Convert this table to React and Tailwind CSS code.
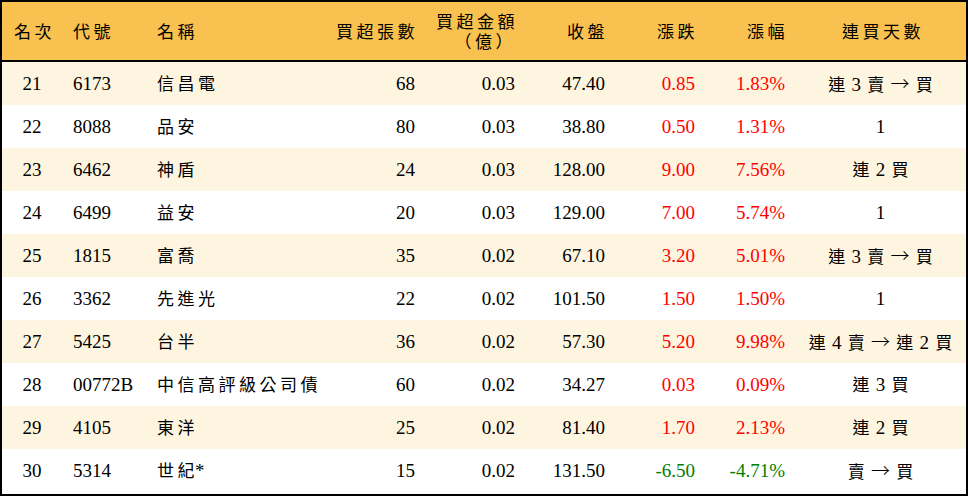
import React from "react";

const rows = [
  ["21", "6173", "信昌電", "68", "0.03", "47.40", "0.85", "1.83%", "連 3 賣 → 買", "r"],
  ["22", "8088", "品安", "80", "0.03", "38.80", "0.50", "1.31%", "1", "r"],
  ["23", "6462", "神盾", "24", "0.03", "128.00", "9.00", "7.56%", "連 2 買", "r"],
  ["24", "6499", "益安", "20", "0.03", "129.00", "7.00", "5.74%", "1", "r"],
  ["25", "1815", "富喬", "35", "0.02", "67.10", "3.20", "5.01%", "連 3 賣 → 買", "r"],
  ["26", "3362", "先進光", "22", "0.02", "101.50", "1.50", "1.50%", "1", "r"],
  ["27", "5425", "台半", "36", "0.02", "57.30", "5.20", "9.98%", "連 4 賣 → 連 2 買", "r"],
  ["28", "00772B", "中信高評級公司債", "60", "0.02", "34.27", "0.03", "0.09%", "連 3 買", "r"],
  ["29", "4105", "東洋", "25", "0.02", "81.40", "1.70", "2.13%", "連 2 買", "r"],
  ["30", "5314", "世紀*", "15", "0.02", "131.50", "-6.50", "-4.71%", "賣 → 買", "g"],
];

const isCJK = (ch) => /[\u3000-\u9fff\uff00-\uffef]/.test(ch);

function Name({ text }) {
  const parts = Array.from(text);
  return (
    <>
      {parts.map((ch, i) => {
        if (!isCJK(ch)) return <span key={i}>{ch}</span>;
        const nextCJK = i < parts.length - 1 && isCJK(parts[i + 1]);
        return (
          <span
            key={i}
            className={`text-[17px] font-['Noto_Sans_CJK_TC',sans-serif] ${nextCJK ? "mr-[3.5px]" : "mr-[0.5px]"}`}
          >
            {ch}
          </span>
        );
      })}
    </>
  );
}

function Days({ text }) {
  const parts = Array.from(text);
  return (
    <>
      {parts.map((ch, i) => {
        if (ch === "→")
          return (
            <span key={i} className="text-[19px] font-['Noto_Sans_CJK_TC',sans-serif] font-light">
              {ch}
            </span>
          );
        if (isCJK(ch))
          return (
            <span key={i} className="text-[17px] mx-[1.5px] font-['Noto_Sans_CJK_TC',sans-serif]">
              {ch}
            </span>
          );
        return <span key={i}>{ch}</span>;
      })}
    </>
  );
}

const grid =
  "grid grid-cols-[60px_83px_185px_95px_100px_90px_90px_90px_171px]";

export default function App() {
  return (
    <div className="w-[968px] h-[496px] border-2 border-black bg-white font-['Liberation_Serif','Noto_Sans_CJK_TC',serif] text-[19px] text-black leading-none">
      <div className={`${grid} h-[60px] bg-[#f8c150] border-b-2 border-black items-center`}>
        <div className="text-center pl-[2px]"><Name text="名次" /></div>
        <div className="pl-[11px]"><Name text="代號" /></div>
        <div className="pl-[12px]"><Name text="名稱" /></div>
        <div className="text-right pr-[10px]"><Name text="買超張數" /></div>
        <div className="text-right pr-[10px] leading-[19px] -mt-[1px]">
          <div><Name text="買超金額" /></div>
          <div className="pr-[2px]"><Name text="（億）" /></div>
        </div>
        <div className="text-right pr-[10px]"><Name text="收盤" /></div>
        <div className="text-right pr-[10px]"><Name text="漲跌" /></div>
        <div className="text-right pr-[10px]"><Name text="漲幅" /></div>
        <div className="text-center pl-[2px]"><Name text="連買天數" /></div>
      </div>
      {rows.map((r, i) => {
        const color = r[9] === "g" ? "text-[#008000]" : "text-[#ff0000]";
        return (
          <div
            key={r[0]}
            className={`${grid} h-[43px] items-center ${i % 2 === 0 ? "bg-[#fef5e1]" : "bg-white"}`}
          >
            <div className="text-center">{r[0]}</div>
            <div className="pl-[11px]">{r[1]}</div>
            <div className="pl-[12px]"><Name text={r[2]} /></div>
            <div className="text-right pr-[10px]">{r[3]}</div>
            <div className="text-right pr-[10px]">{r[4]}</div>
            <div className="text-right pr-[10px]">{r[5]}</div>
            <div className={`text-right pr-[10px] ${color}`}>{r[6]}</div>
            <div className={`text-right pr-[10px] ${color}`}>{r[7]}</div>
            <div className="text-center whitespace-pre"><Days text={r[8]} /></div>
          </div>
        );
      })}
    </div>
  );
}
